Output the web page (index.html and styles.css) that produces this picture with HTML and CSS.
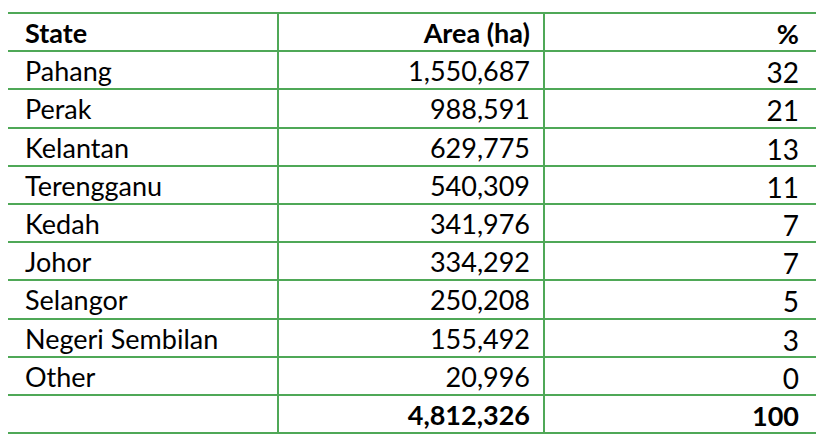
FILE: index.html
```html
<!DOCTYPE html>
<html>
<head>
<meta charset="utf-8">
<link rel="stylesheet" href="styles.css">
</head>
<body>
<table class="tbl">
  <colgroup><col class="c1"><col class="c2"><col class="c3"></colgroup>
  <thead>
    <tr class="head"><td>State</td><td class="num">Area (ha)</td><td class="num pct">%</td></tr>
  </thead>
  <tbody>
    <tr><td>Pahang</td><td class="num">1,550,687</td><td class="num pct">32</td></tr>
    <tr><td>Perak</td><td class="num">988,591</td><td class="num pct">21</td></tr>
    <tr><td>Kelantan</td><td class="num">629,775</td><td class="num pct">13</td></tr>
    <tr><td>Terengganu</td><td class="num">540,309</td><td class="num pct">11</td></tr>
    <tr><td>Kedah</td><td class="num">341,976</td><td class="num pct">7</td></tr>
    <tr><td>Johor</td><td class="num">334,292</td><td class="num pct">7</td></tr>
    <tr><td>Selangor</td><td class="num">250,208</td><td class="num pct">5</td></tr>
    <tr><td>Negeri Sembilan</td><td class="num">155,492</td><td class="num pct">3</td></tr>
    <tr><td>Other</td><td class="num">20,996</td><td class="num pct">0</td></tr>
    <tr class="total"><td></td><td class="num">4,812,326</td><td class="num pct">100</td></tr>
  </tbody>
</table>
</body>
</html>
```
FILE: styles.css
```css
html, body {
  margin: 0;
  padding: 0;
  background: #ffffff;
}
body {
  padding: 12px 0 0 8px;
  font-family: Lato, "Open Sans", sans-serif;
  color: #000;
}
.tbl {
  border-collapse: separate;
  border-spacing: 0;
  width: 808px;
  table-layout: fixed;
}
.c1 { width: 269px; }
.c2 { width: 268px; }
.c3 { width: 271px; }
.tbl td {
  border-bottom: 2px solid #4fa857;
  padding: 2px 17px 0 17px;
  line-height: 34.18px;
  font-size: 27px;
  vertical-align: top;
  white-space: nowrap;
}
.head td {
  border-top: 2px solid #4fa857;
}
.tbl td:nth-child(2) {
  border-left: 2px solid #4fa857;
  border-right: 2px solid #4fa857;
  padding-right: 13px;
}
.num {
  text-align: right;
}
.tbl td.pct {
  padding-top: 4px;
  line-height: 32.18px;
  font-size: 28px;
}
.head td, .total td {
  font-weight: bold;
}
.head td.pct, .total td.pct {
  font-size: 27px;
}
```
